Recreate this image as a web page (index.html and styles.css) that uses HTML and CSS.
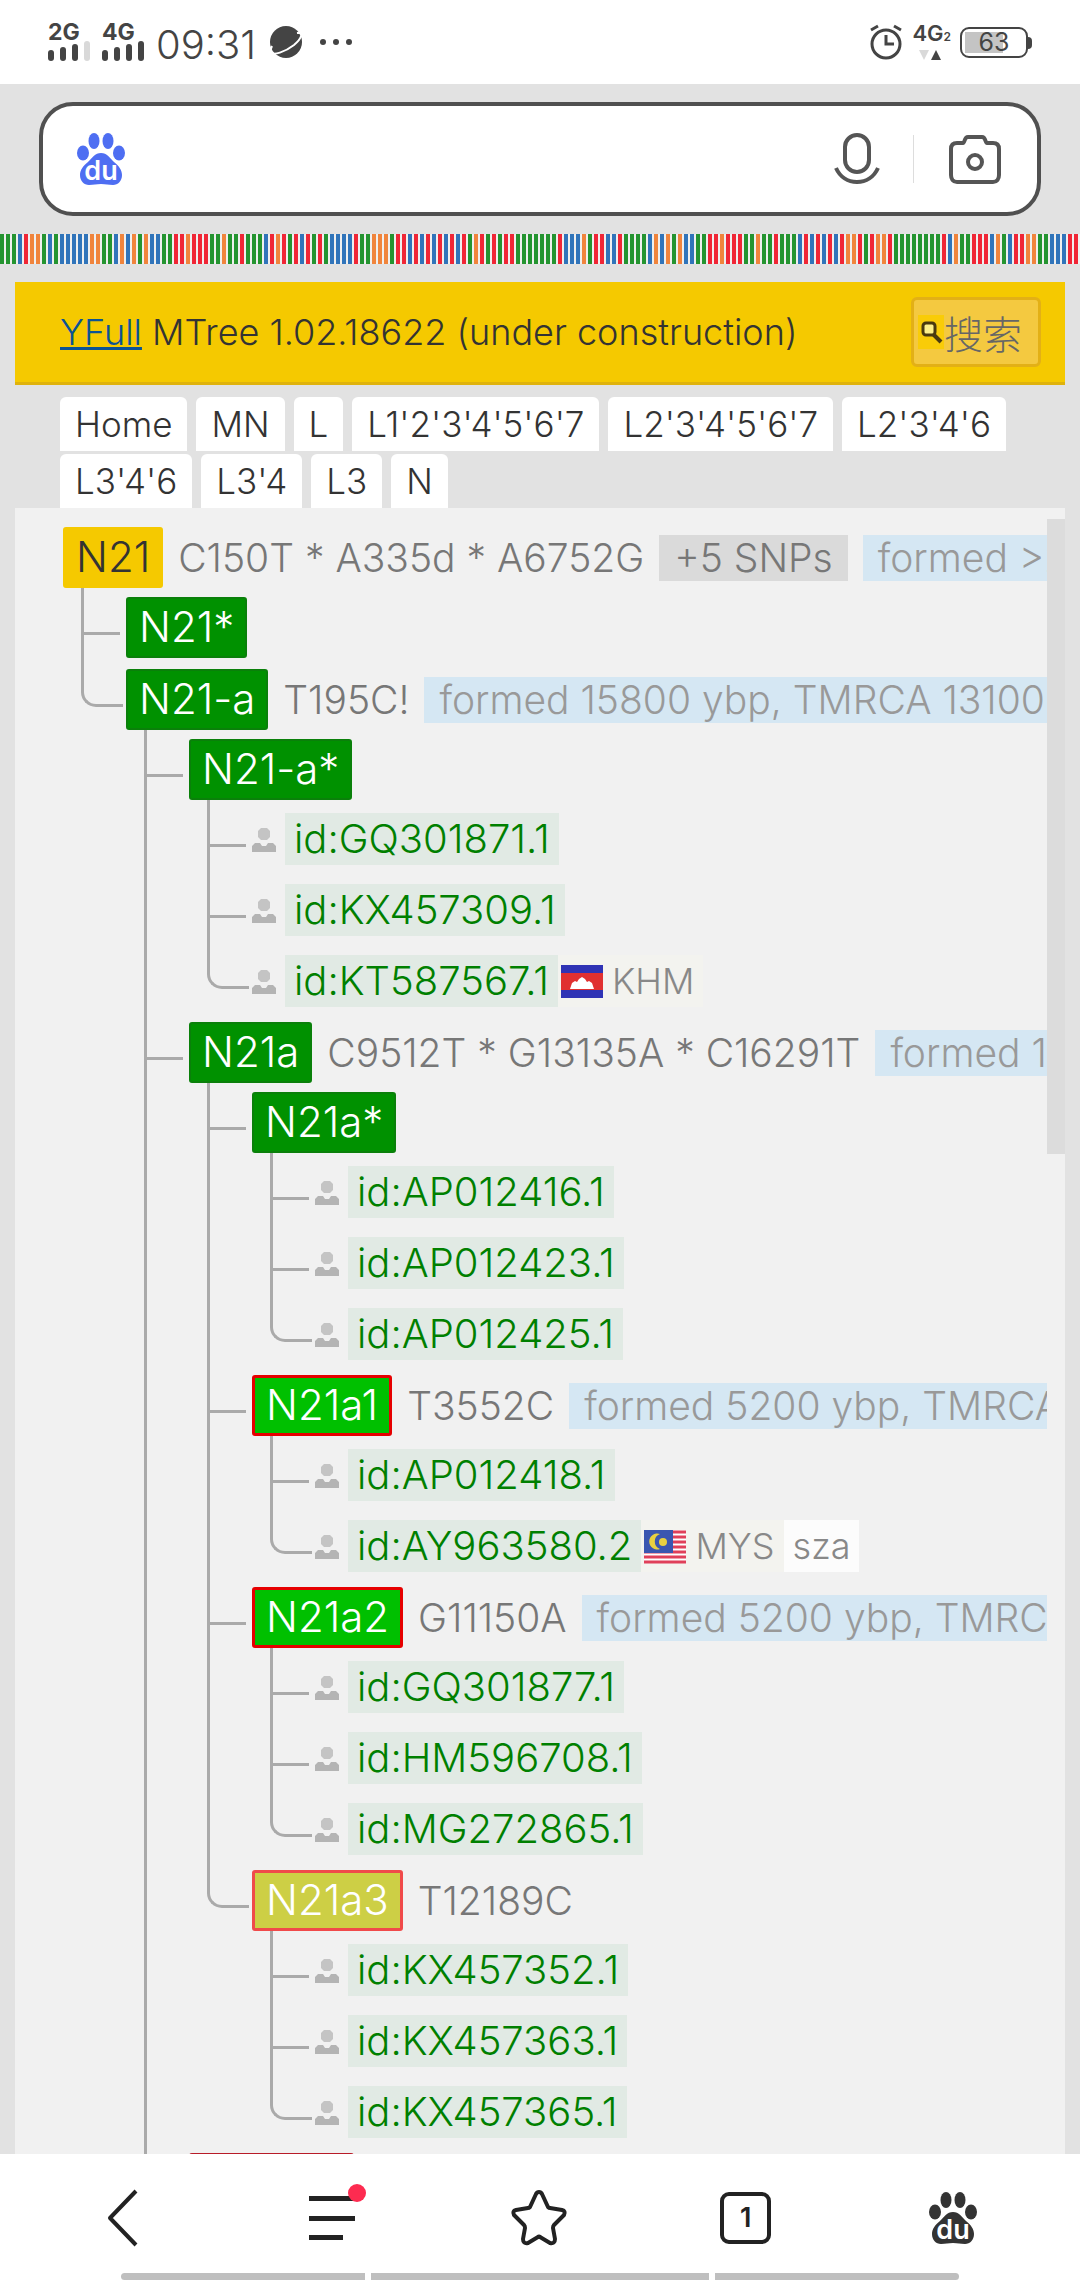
FILE: index.html
```
<!DOCTYPE html>
<html lang="en">

<head>
  <meta charset="UTF-8">
  <meta name="viewport" content="width=device-width, initial-scale=1.0">
  <title>N21 MTree</title>
  <link rel="stylesheet" href="styles.css">
</head>

<body>
  <!-- icons used more than once -->
  <svg class="defs" aria-hidden="true">
    <symbol id="paw" viewBox="0 0 48 52">
      <ellipse cx="6" cy="20" rx="6" ry="7.5" />
      <ellipse cx="17" cy="8" rx="5.5" ry="8" />
      <ellipse cx="31" cy="8" rx="5.5" ry="8" />
      <ellipse cx="42" cy="20" rx="6" ry="7.5" />
      <path d="M24 20C30 20 33 25 37 29C42 33 45 37 45 42C45 48 41 52 36 52C31 52 29 51 24 51C19 51 17 52 12 52C7 52 3 48 3 42C3 37 6 33 11 29C15 25 18 20 24 20Z" />
    </symbol>
    <symbol id="person" viewBox="0 0 24 24">
      <path d="M9 0h6l3 3v6l-3 3H9L6 9V3z" fill="#c4c4c4" />
      <path d="M0 24v-6l3-3h5l2 3h4l2-3h5l3 3v6z" fill="#b4b4b4" />
    </symbol>
  </svg>

  <header class="status">
    <div class="signal">
      <b>2G</b>
      <svg width="43" height="20" viewBox="0 0 43 20" fill="#444">
        <rect x="0" y="9" width="6" height="11" rx="3" />
        <rect x="12" y="6" width="6" height="14" rx="3" />
        <rect x="24" y="3" width="6" height="17" rx="3" />
        <rect x="36" y="0" width="6" height="20" rx="3" fill="#d9d9d9" />
      </svg>
    </div>
    <div class="signal">
      <b>4G</b>
      <svg width="43" height="20" viewBox="0 0 43 20" fill="#444">
        <rect x="0" y="9" width="6" height="11" rx="3" />
        <rect x="12" y="6" width="6" height="14" rx="3" />
        <rect x="24" y="3" width="6" height="17" rx="3" />
        <rect x="36" y="0" width="6" height="20" rx="3" />
      </svg>
    </div>
    <time class="clock">09:31</time>
    <svg class="planet" width="32" height="34" viewBox="0 0 32 34">
      <circle cx="16" cy="17" r="16" fill="#444" />
      <path d="M27 8C34 7 32 13 24 20C15 27 3 31 1 27C0 25 1 23 2 21" fill="none" stroke="#fff" stroke-width="2" />
    </svg>
    <svg class="dots" width="33" height="6" viewBox="0 0 33 6" fill="#444">
      <circle cx="3" cy="3" r="3" />
      <circle cx="16" cy="3" r="3" />
      <circle cx="29" cy="3" r="3" />
    </svg>

    <div class="status-right">
      <svg width="33" height="36" viewBox="0 0 33 36" fill="none" stroke="#444" stroke-width="3">
        <circle cx="16" cy="20" r="14" />
        <path d="M16 11v9h8M1 6l7-4M31 6l-7-4" />
      </svg>
      <div class="network">
        <b>4G<small>2</small></b>
        <svg width="22" height="10" viewBox="0 0 22 10">
          <path d="M0 0h10L5 10z" fill="#d9d9d9" />
          <path d="M12 10h10L17 0z" fill="#444" />
        </svg>
      </div>
      <div class="battery"><span>63</span></div>
    </div>
  </header>

  <form class="search" role="search">
    <svg width="48" height="52" fill="#4e6ef2">
      <use href="#paw" />
      <text class="du" x="24" y="47">du</text>
    </svg>
    <input type="search" aria-label="Search">
    <button type="button" aria-label="Voice search">
      <svg width="46" height="52" viewBox="0 0 46 52" fill="none" stroke="#555" stroke-width="4">
        <rect x="11" y="2" width="24" height="37" rx="12" />
        <path d="M2 35C6 44 14 49 23 49S40 44 44 35" />
      </svg>
    </button>
    <i class="divider"></i>
    <button type="button" aria-label="Image search">
      <svg width="52" height="50" viewBox="0 0 52 50" fill="none" stroke="#555" stroke-width="4">
        <path d="M8 9h6c2 0 1-6 5-6h14c4 0 3 6 5 6h6c4 0 6 2 6 6v26c0 4-2 7-6 7H8c-4 0-6-3-6-7V15c0-4 2-6 6-6z" />
        <circle cx="26" cy="28" r="7" />
      </svg>
    </button>
  </form>

  <div class="stripes" id="stripes"></div>

  <main class="page">
    <div class="title">
      <h1><a href="#">YFull</a> MTree 1.02.18622 (under construction)</h1>
      <button type="button" class="find">
        <svg width="26" height="34" viewBox="0 0 26 34">
          <path d="M0 0h26v34H0z" fill="#f9cc08" />
          <path d="M15 19l8 8" stroke="#4a3a10" stroke-width="4" />
          <rect x="5" y="8" width="12" height="12" rx="3" fill="#fdf08a" stroke="#4a3a10" stroke-width="3" />
        </svg>搜索</button>
    </div>

    <nav class="crumbs">
      <a href="#">Home</a>
      <a href="#">MN</a>
      <a href="#">L</a>
      <a href="#">L1'2'3'4'5'6'7</a>
      <a href="#">L2'3'4'5'6'7</a>
      <a href="#">L2'3'4'6</a>
      <a href="#">L3'4'6</a>
      <a href="#">L3'4</a>
      <a href="#">L3</a>
      <a href="#">N</a>
    </nav>

    <div class="panel">
      <div class="scroll">
        <ul class="tree">
          <li>
            <div class="row"><a href="#" class="node root">N21</a><span class="snps">C150T * A335d * A6752G</span><span class="more">+5 SNPs</span><span class="age">formed &gt;20000 ybp</span></div>
            <ul>
              <li class="leaf">
                <div class="row"><a href="#" class="node">N21*</a></div>
              </li>
              <li>
                <div class="row"><a href="#" class="node">N21-a</a><span class="snps">T195C!</span><span class="age">formed 15800 ybp, TMRCA 13100 ybp</span></div>
                <ul>
                  <li>
                    <div class="row"><a href="#" class="node">N21-a*</a></div>
                    <ul>
                      <li class="sample"><svg><use href="#person" /></svg><a href="#">id:GQ301871.1</a></li>
                      <li class="sample"><svg><use href="#person" /></svg><a href="#">id:KX457309.1</a></li>
                      <li class="sample"><svg><use href="#person" /></svg><a href="#">id:KT587567.1</a><span class="country"><svg class="flag" viewBox="0 0 42 33">
                            <path d="M0 0h42v33H0z" fill="#2f33b5" />
                            <path d="M0 8h42v17H0z" fill="#e03030" />
                            <path d="M9 24l2-6 3-2 2 1 2-3 3-2 3 2 2 3 2-1 3 2 2 6z" fill="#fff" />
                          </svg>KHM</span></li>
                    </ul>
                  </li>
                  <li>
                    <div class="row"><a href="#" class="node">N21a</a><span class="snps">C9512T * G13135A * C16291T</span><span class="age">formed 11500 ybp</span></div>
                    <ul>
                      <li>
                        <div class="row"><a href="#" class="node">N21a*</a></div>
                        <ul>
                          <li class="sample"><svg><use href="#person" /></svg><a href="#">id:AP012416.1</a></li>
                          <li class="sample"><svg><use href="#person" /></svg><a href="#">id:AP012423.1</a></li>
                          <li class="sample"><svg><use href="#person" /></svg><a href="#">id:AP012425.1</a></li>
                        </ul>
                      </li>
                      <li>
                        <div class="row"><a href="#" class="node new">N21a1</a><span class="snps">T3552C</span><span class="age">formed 5200 ybp, TMRCA 5200 ybp</span></div>
                        <ul>
                          <li class="sample"><svg><use href="#person" /></svg><a href="#">id:AP012418.1</a></li>
                          <li class="sample"><svg><use href="#person" /></svg><a href="#">id:AY963580.2</a><span class="country"><svg class="flag" viewBox="0 0 42 33">
                                <path d="M0 0h42v33H0z" fill="#fff" />
                                <path d="M0 2h42M0 7h42M0 12h42M0 17h42M0 22h42M0 27h42M0 32h42" stroke="#e0405a" stroke-width="3" />
                                <path d="M0 0h29v23H0z" fill="#3a56b0" />
                                <path d="M16 4a8 8 0 1 0 0 15a8 8 0 0 1 0-15z" fill="#e8d040" />
                                <circle cx="19" cy="12" r="4" fill="#e8d040" />
                              </svg>MYS</span><span class="lang">sza</span></li>
                        </ul>
                      </li>
                      <li>
                        <div class="row"><a href="#" class="node new">N21a2</a><span class="snps">G11150A</span><span class="age">formed 5200 ybp, TMRCA 5200 ybp</span></div>
                        <ul>
                          <li class="sample"><svg><use href="#person" /></svg><a href="#">id:GQ301877.1</a></li>
                          <li class="sample"><svg><use href="#person" /></svg><a href="#">id:HM596708.1</a></li>
                          <li class="sample"><svg><use href="#person" /></svg><a href="#">id:MG272865.1</a></li>
                        </ul>
                      </li>
                      <li>
                        <div class="row"><a href="#" class="node draft">N21a3</a><span class="snps">T12189C</span></div>
                        <ul>
                          <li class="sample"><svg><use href="#person" /></svg><a href="#">id:KX457352.1</a></li>
                          <li class="sample"><svg><use href="#person" /></svg><a href="#">id:KX457363.1</a></li>
                          <li class="sample"><svg><use href="#person" /></svg><a href="#">id:KX457365.1</a></li>
                        </ul>
                      </li>
                    </ul>
                  </li>
                  <li>
                    <div class="row"><a href="#" class="node new next" aria-label="Next branch"></a></div>
                  </li>
                </ul>
              </li>
            </ul>
          </li>
        </ul>
      </div>
      <div class="scrollbar"></div>
    </div>
  </main>

  <footer class="toolbar">
    <nav>
      <button type="button" aria-label="Back">
        <svg width="56" height="56" viewBox="0 0 56 56" fill="none" stroke="#222" stroke-width="4" stroke-linejoin="round">
          <path d="M39 1L13 28L39 55" />
        </svg>
      </button>
      <button type="button" aria-label="Menu" class="menu">
        <svg width="46" height="56" viewBox="0 0 46 56" fill="#222">
          <path d="M0 6h46v5H0zM0 26h46v5H0zM0 45h34v5H0z" />
        </svg>
        <i class="dot"></i>
      </button>
      <button type="button" aria-label="Favourites">
        <svg width="56" height="56" viewBox="0 0 56 56" fill="none" stroke="#222" stroke-width="4" stroke-linejoin="round">
          <path d="M28 2Q30 2 31 4L37 17Q38 18 39 18L51 20Q55 21 53 25L43 35Q42 36 42 38L44 49Q44 54 39 53L29 47Q28 46 27 47L17 53Q12 54 12 49L14 38Q14 36 13 35L3 25Q1 21 5 20L17 18Q18 18 19 17L25 4Q26 2 28 2Z" />
        </svg>
      </button>
      <button type="button" aria-label="Tabs"><span class="tabs">1</span></button>
      <button type="button" aria-label="Home">
        <svg width="48" height="52" fill="#333">
          <use href="#paw" />
          <text class="du" x="24" y="47">du</text>
        </svg>
      </button>
    </nav>
    <div class="gesture"><i></i><i></i><i></i></div>
  </footer>

  <script>
    // one letter per stripe: g green, b blue, r red, o orange
    const seq = 'gggbroogbgbbbbbooggbobogobbggrrorrrggoggrgggbrorgrbrgrgbbbbrggooogrrbrbrbrbrbrgorgrgrrgggg' +
      'gggrbbbogrrbbrggggbobogobbggrrorrrggoggrgggbrbrbrbroorgroorggggggggrboggrrrbogbrrooggbbbrr';
    const stripes = document.getElementById('stripes');
    for (const c of seq) {
      const bar = document.createElement('i');
      bar.className = c;
      stripes.appendChild(bar);
    }
  </script>
</body>

</html>
```

FILE: styles.css
```
* {
  box-sizing: border-box;
}

body {
  display: flex;
  flex-direction: column;
  height: 100vh;
  margin: 0;
  overflow: hidden;
  background-color: #e2e2e2;
  color: #333;
  font-family: Inter, "Noto Sans CJK SC", sans-serif;
  font-size: 36px;
  font-weight: 300;
}

a {
  color: inherit;
  text-decoration: none;
}

button {
  padding: 0;
  border: none;
  background: none;
  color: inherit;
  font: inherit;
}

svg {
  display: block;
  flex: none;
  overflow: visible;
}

ul {
  margin: 0;
  padding: 0;
  list-style: none;
}

.defs {
  display: none;
}

/* status bar */
.status {
  display: flex;
  align-items: center;
  flex: none;
  height: 84px;
  padding: 0 48px;
  background-color: #fff;
  color: #444;
}

.signal {
  width: 54px;
}

.signal b,
.network b {
  display: block;
  font-size: 23px;
  font-weight: 700;
  line-height: 18px;
}

.clock {
  margin: 4px 14px 0 0;
  font-size: 40px;
}

.dots {
  margin-left: 18px;
}

.status-right {
  display: flex;
  align-items: center;
  gap: 9px;
  margin-left: auto;
}

.network b {
  font-size: 22px;
  font-weight: 600;
}

.network small {
  font-size: 12px;
}

.network svg {
  margin: 4px 0 0 7px;
}

.battery {
  position: relative;
  width: 68px;
  height: 31px;
  margin-right: 4px;
  padding: 3px;
  border: 2px solid #444;
  border-radius: 9px;
  background: linear-gradient(#c4c4c4, #c4c4c4) 3px 3px / 38px 21px no-repeat;
  font-size: 25px;
  font-weight: 400;
  line-height: 21px;
  text-align: center;
}

.battery::after {
  content: "";
  position: absolute;
  top: 8px;
  right: -6px;
  width: 4px;
  height: 12px;
  border-radius: 0 4px 4px 0;
  background-color: #444;
}

/* search box */
.search {
  display: flex;
  align-items: center;
  flex: none;
  height: 114px;
  margin: 18px 39px;
  padding: 0 36px 0 34px;
  border: 4px solid #505050;
  border-radius: 34px;
  background-color: #fff;
}

.search input {
  flex: 1;
  min-width: 0;
  height: 80px;
  border: none;
  outline: none;
  background: none;
  font: inherit;
}

.du {
  fill: #fff;
  font-size: 27px;
  font-weight: 600;
  text-anchor: middle;
}

.divider {
  width: 1px;
  height: 48px;
  margin: 0 35px 0 33px;
  background-color: #ddd;
}

/* coloured stripes */
.stripes {
  display: flex;
  flex: none;
  height: 30px;
}

.stripes i {
  flex: 1;
  border-right: 2px solid #efefef;
}

.stripes .g {
  background-color: #249430;
}

.stripes .b {
  background-color: #3074ba;
}

.stripes .r {
  background-color: #f02636;
}

.stripes .o {
  background-color: #f0843c;
}

/* page */
.page {
  display: flex;
  flex: 1;
  flex-direction: column;
  min-height: 0;
  margin: 18px 15px 0;
}

.title {
  display: flex;
  align-items: center;
  justify-content: space-between;
  flex: none;
  height: 103px;
  padding: 0 24px 0 45px;
  border-bottom: 3px solid #dfb20c;
  background-color: #f5c900;
}

.title h1 {
  margin: 0;
  font-size: 36px;
  font-weight: 300;
}

.title h1 a {
  color: #0b5394;
  text-decoration: underline;
}

.find {
  display: flex;
  align-items: center;
  height: 70px;
  padding: 0 16px 0 4px;
  border: 3px solid #e3b016;
  border-radius: 6px;
  background-color: #f4c940;
  color: #666;
  font-size: 39px;
}

.crumbs {
  display: flex;
  flex: none;
  flex-wrap: wrap;
  gap: 3px 9px;
  padding: 12px 24px 0 45px;
  font-size: 35px;
}

.crumbs a {
  height: 54px;
  padding: 0 15px;
  border-radius: 6px 6px 0 0;
  background-color: #fff;
  line-height: 54px;
}

.panel {
  display: flex;
  flex: 1;
  min-height: 0;
  background-color: #f1f1f1;
}

.scroll {
  flex: 1;
  min-width: 0;
  padding: 19px 0 0 48px;
  overflow: hidden;
}

.scrollbar {
  flex: none;
  width: 18px;
  height: 635px;
  margin-top: 11px;
  background-color: #dcdcdc;
}

/* tree */
.tree ul {
  padding-left: 63px;
}

.tree li {
  position: relative;
}

.tree li li::before {
  content: "";
  position: absolute;
  top: -9px;
  left: -45px;
  width: 39px;
  height: 44px;
  border-bottom: 3px solid #aaa;
}

.tree li li:last-child::before {
  border-left: 3px solid #aaa;
  border-bottom-left-radius: 15px;
}

/* trunk running down to the next sibling */
.tree li li:not(:last-child)::after {
  content: "";
  position: absolute;
  top: -9px;
  bottom: 0;
  left: -45px;
  width: 3px;
  background-color: #aaa;
}

.row {
  display: flex;
  align-items: center;
  height: 61px;
  margin-bottom: 9px;
  white-space: nowrap;
}

.leaf {
  padding-bottom: 2px;
}

.node {
  flex: none;
  height: 61px;
  padding: 0 11px;
  border: 2px solid #0a800a;
  border-radius: 3px;
  background-color: #009100;
  color: #fff;
  font-size: 42px;
  line-height: 56px;
}

.root {
  border-color: #f5c900;
  background-color: #f5c900;
  color: #333;
}

.new {
  border: 3px solid #e60000;
  background-color: #00c000;
  line-height: 54px;
}

.draft {
  border: 3px solid #f04a4a;
  background-color: #cdcf45;
  line-height: 54px;
}

.next {
  width: 165px;
  border-color: #b81c28;
}

.snps,
.more {
  margin-left: 15px;
  color: #777;
  font-size: 39px;
}

.more,
.age {
  height: 46px;
  padding: 0 15px;
  line-height: 46px;
}

.more {
  background-color: #dadada;
}

.age {
  margin-left: 15px;
  background-color: #d5e7f3;
  color: #999;
  font-size: 39px;
}

.sample {
  display: flex;
  align-items: center;
  height: 71px;
  padding-bottom: 11px;
  white-space: nowrap;
}

.sample > svg {
  width: 24px;
  height: 24px;
  margin: 2px 9px 0 0;
}

.sample a {
  height: 52px;
  padding: 0 9px;
  background-color: #e1eae4;
  color: #008000;
  font-size: 40px;
  line-height: 52px;
}

.country,
.lang {
  display: flex;
  align-items: center;
  height: 52px;
  padding: 0 9px 0 3px;
  background-color: #f3f3ef;
  color: #888;
  font-size: 36px;
}

.lang {
  padding: 0 9px;
  background-color: #fcfcfc;
}

.flag {
  width: 42px;
  height: 33px;
  margin-right: 9px;
}

/* bottom toolbar */
.toolbar {
  display: flex;
  flex: none;
  flex-direction: column;
  height: 126px;
  background-color: #fff;
}

.toolbar nav {
  display: flex;
  flex: 1;
  align-items: center;
  padding: 8px 24px 0 22px;
}

.toolbar button {
  display: flex;
  flex: 1;
  align-items: center;
  justify-content: center;
}

.menu {
  position: relative;
}

.dot {
  position: absolute;
  top: -6px;
  left: 119px;
  width: 18px;
  height: 18px;
  border-radius: 50%;
  background-color: #fd2b50;
}

.tabs {
  width: 51px;
  height: 52px;
  border: 4px solid #222;
  border-radius: 9px;
  color: #222;
  font-size: 27px;
  font-weight: 600;
  line-height: 44px;
}

.gesture {
  display: flex;
  gap: 6px;
  height: 7px;
  padding: 0 121px;
}

.gesture i {
  flex: 244;
  background-color: #bfbfbf;
}

.gesture i:nth-child(2) {
  flex: 338;
}

.gesture i:first-child {
  border-radius: 4px 0 0 4px;
}

.gesture i:last-child {
  border-radius: 0 4px 4px 0;
}
```
